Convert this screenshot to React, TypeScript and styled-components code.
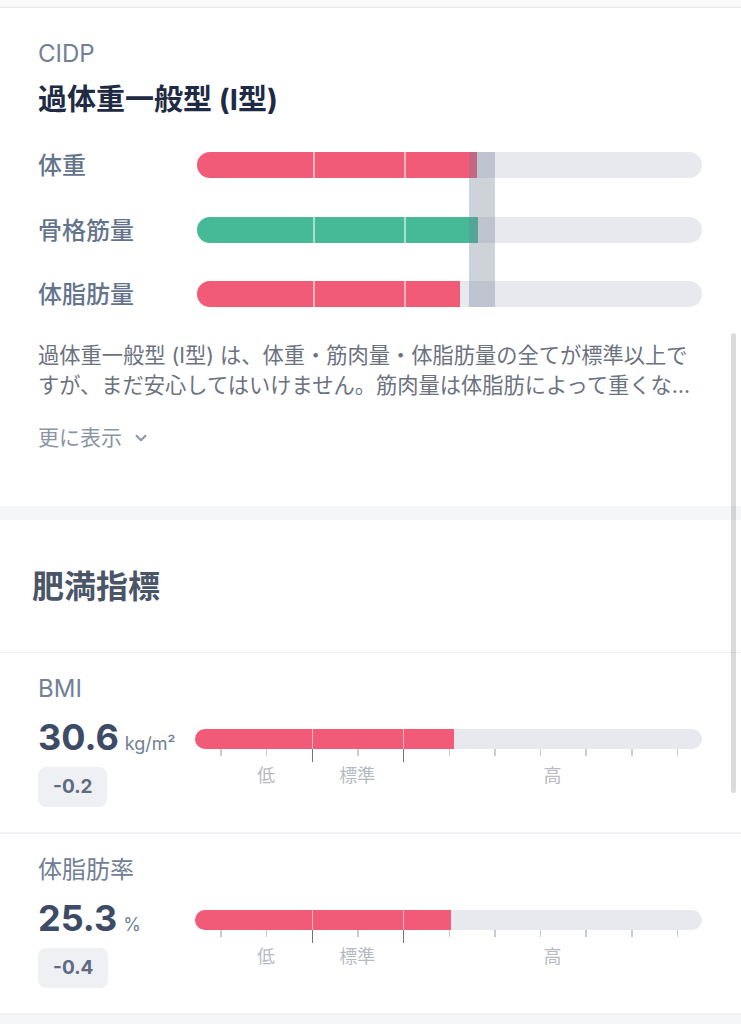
import styled, { createGlobalStyle } from "styled-components";
import { ChevronDown } from "lucide-react";

const GlobalStyle = createGlobalStyle`
  body {
    margin: 0;
    background: #ffffff;
    font-family: Inter, "Noto Sans CJK JP", sans-serif;
    -webkit-font-smoothing: antialiased;
  }
`;

const RED = "#f15b77";
const GREEN = "#46b996";

const bodyRows = [
  { label: "体重", fill: 55.4, color: RED },
  { label: "骨格筋量", fill: 55.6, color: GREEN },
  { label: "体脂肪量", fill: 52.1, color: RED },
];

const metrics = [
  { label: "BMI", value: "30.6", unit: "kg/m²", diff: "-0.2", fill: 51.1 },
  { label: "体脂肪率", value: "25.3", unit: "%", diff: "-0.4", fill: 50.5 },
];

const ticks = [5, 14, 23, 32, 41, 50, 59, 68, 77, 86, 95];
const splits = [23, 41];
const zones = [
  { text: "低", at: 14 },
  { text: "標準", at: 32 },
  { text: "高", at: 70.5 },
];

const Bar = ({ fill, color, height }: { fill: number; color: string; height: number }) => (
  <Track $height={height}>
    <Fill style={{ width: `${fill}%` }} $color={color} />
    {splits.map((s) => (
      <Split key={s} style={{ left: `${s}%` }} />
    ))}
  </Track>
);

export default function App() {
  return (
    <Page>
      <GlobalStyle />
      <TopEdge />

      <Card>
        <Eyebrow>CIDP</Eyebrow>
        <Title>過体重一般型 (I型)</Title>

        <Rows>
          {bodyRows.map((r, i) => (
            <RowLabel key={r.label + "l"} $row={i + 1}>
              {r.label}
            </RowLabel>
          ))}
          {bodyRows.map((r, i) => (
            <RowBar key={r.label + "b"} $row={i + 1}>
              <Bar fill={r.fill} color={r.color} height={26} />
            </RowBar>
          ))}
          <Band />
        </Rows>

        <Description>
          過体重一般型 (I型) は、体重・筋肉量・体脂肪量の全てが標準以上ですが、まだ安心してはいけません。筋肉量は体脂肪によって重くなった体を支えるために増えている可能性があります。
        </Description>

        <MoreLink>
          更に表示
          <ChevronDown size={18} strokeWidth={2.6} />
        </MoreLink>
      </Card>

      <SectionGap />

      <SectionHeader>
        <Heading>肥満指標</Heading>
      </SectionHeader>

      {metrics.map((m) => (
        <MetricSection key={m.label}>
          <Eyebrow>{m.label}</Eyebrow>
          <MetricBody>
            <div>
              <ValueLine>
                <BigNumber>{m.value}</BigNumber>
                <Unit>{m.unit}</Unit>
              </ValueLine>
              <Badge>{m.diff}</Badge>
            </div>
            <Scale>
              <Bar fill={m.fill} color={RED} height={20} />
              <TickRow>
                {ticks.map((t) => (
                  <Tick key={t} $major={splits.includes(t)} style={{ left: `${t}%` }} />
                ))}
              </TickRow>
              <ZoneRow>
                {zones.map((z) => (
                  <Zone key={z.text} style={{ left: `${z.at}%` }}>
                    {z.text}
                  </Zone>
                ))}
              </ZoneRow>
            </Scale>
          </MetricBody>
        </MetricSection>
      ))}

      <SectionGap />
      <ScrollIndicator />
    </Page>
  );
}

const Page = styled.div`
  position: relative;
  width: 100%;
  background: #ffffff;
`;

const TopEdge = styled.div`
  height: 7px;
  background: #f9f9fa;
  border-bottom: 1px solid #e7e8ea;
`;

const Card = styled.section`
  padding: 30px 39px 53px 38px;
`;

const Eyebrow = styled.div`
  font-size: 24px;
  line-height: 32px;
  color: #718096;
`;

const Title = styled.h2`
  margin: 12px 0 0;
  font-size: 29px;
  line-height: 36px;
  font-weight: 700;
  color: #1f2a44;
`;

const Rows = styled.div`
  display: grid;
  grid-template-columns: 159px 1fr;
  grid-auto-rows: 40px;
  row-gap: 24.5px;
  margin-top: 27px;
`;

const RowLabel = styled.div<{ $row: number }>`
  grid-column: 1;
  grid-row: ${(p) => p.$row};
  display: flex;
  align-items: center;
  padding-bottom: 3px;
  font-size: 24px;
  font-weight: 500;
  color: #64748c;
`;

const RowBar = styled.div<{ $row: number }>`
  grid-column: 2;
  grid-row: ${(p) => p.$row};
  display: flex;
  flex-direction: column;
  justify-content: center;
`;

const Band = styled.div`
  grid-column: 2;
  grid-row: 1 / 4;
  z-index: 1;
  margin: 7px 0 7px 53.8%;
  width: 5.2%;
  background: rgba(113, 128, 150, 0.35);
`;

const Track = styled.div<{ $height: number }>`
  position: relative;
  height: ${(p) => p.$height}px;
  border-radius: ${(p) => p.$height / 2}px;
  background: #e8e9ee;
  overflow: hidden;
`;

const Fill = styled.div<{ $color: string }>`
  height: 100%;
  background: ${(p) => p.$color};
`;

const Split = styled.div`
  position: absolute;
  top: 0;
  bottom: 0;
  width: 1.5px;
  background: rgba(255, 255, 255, 0.55);
`;

const Description = styled.p`
  margin: 27px 0 0;
  font-size: 21.25px;
  line-height: 29.5px;
  color: #6b7280;
  display: -webkit-box;
  -webkit-line-clamp: 2;
  -webkit-box-orient: vertical;
  overflow: hidden;
`;

const MoreLink = styled.div`
  margin-top: 23px;
  display: flex;
  align-items: center;
  gap: 10px;
  font-size: 21px;
  line-height: 30px;
  color: #8b95a5;
`;

const SectionGap = styled.div`
  height: 14px;
  background: #f5f6f8;
`;

const SectionHeader = styled.div`
  padding: 47px 32px 45px;
  border-bottom: 1px solid #eceef1;
`;

const Heading = styled.h2`
  margin: 0;
  font-size: 32px;
  line-height: 40px;
  font-weight: 700;
  color: #4a5568;
`;

const MetricSection = styled.section`
  padding: 20px 39px 25px 38px;
  border-bottom: 2px solid #eff1f4;
`;

const MetricBody = styled.div`
  display: grid;
  grid-template-columns: 157px 1fr;
  margin-top: 12px;
`;

const ValueLine = styled.div`
  display: flex;
  align-items: baseline;
  gap: 6px;
  height: 40px;
`;

const BigNumber = styled.span`
  font-size: 36px;
  line-height: 40px;
  font-weight: 700;
  color: #3d4b67;
`;

const Unit = styled.span`
  font-size: 18px;
  color: #718096;
`;

const Badge = styled.div`
  display: inline-block;
  margin-top: 10px;
  height: 40px;
  line-height: 40px;
  padding: 0 15px;
  border-radius: 8px;
  background: #eef0f4;
  font-size: 19px;
  font-weight: 700;
  color: #5f6b80;
`;

const Scale = styled.div`
  padding-top: 12px;
`;

const TickRow = styled.div`
  position: relative;
  height: 13px;
`;

const Tick = styled.div<{ $major: boolean }>`
  position: absolute;
  top: 0;
  width: 1.5px;
  height: ${(p) => (p.$major ? 13 : 7)}px;
  background: ${(p) => (p.$major ? "#6b7587" : "#c8ccd3")};
`;

const ZoneRow = styled.div`
  position: relative;
  height: 20px;
  margin-top: 4px;
`;

const Zone = styled.span`
  position: absolute;
  top: 0;
  transform: translateX(-50%);
  font-size: 18px;
  line-height: 20px;
  color: #b5bac3;
  white-space: nowrap;
`;

const ScrollIndicator = styled.div`
  position: absolute;
  top: 333px;
  right: 5px;
  width: 5px;
  height: 460px;
  border-radius: 3px;
  background: rgba(0, 0, 0, 0.14);
`;
